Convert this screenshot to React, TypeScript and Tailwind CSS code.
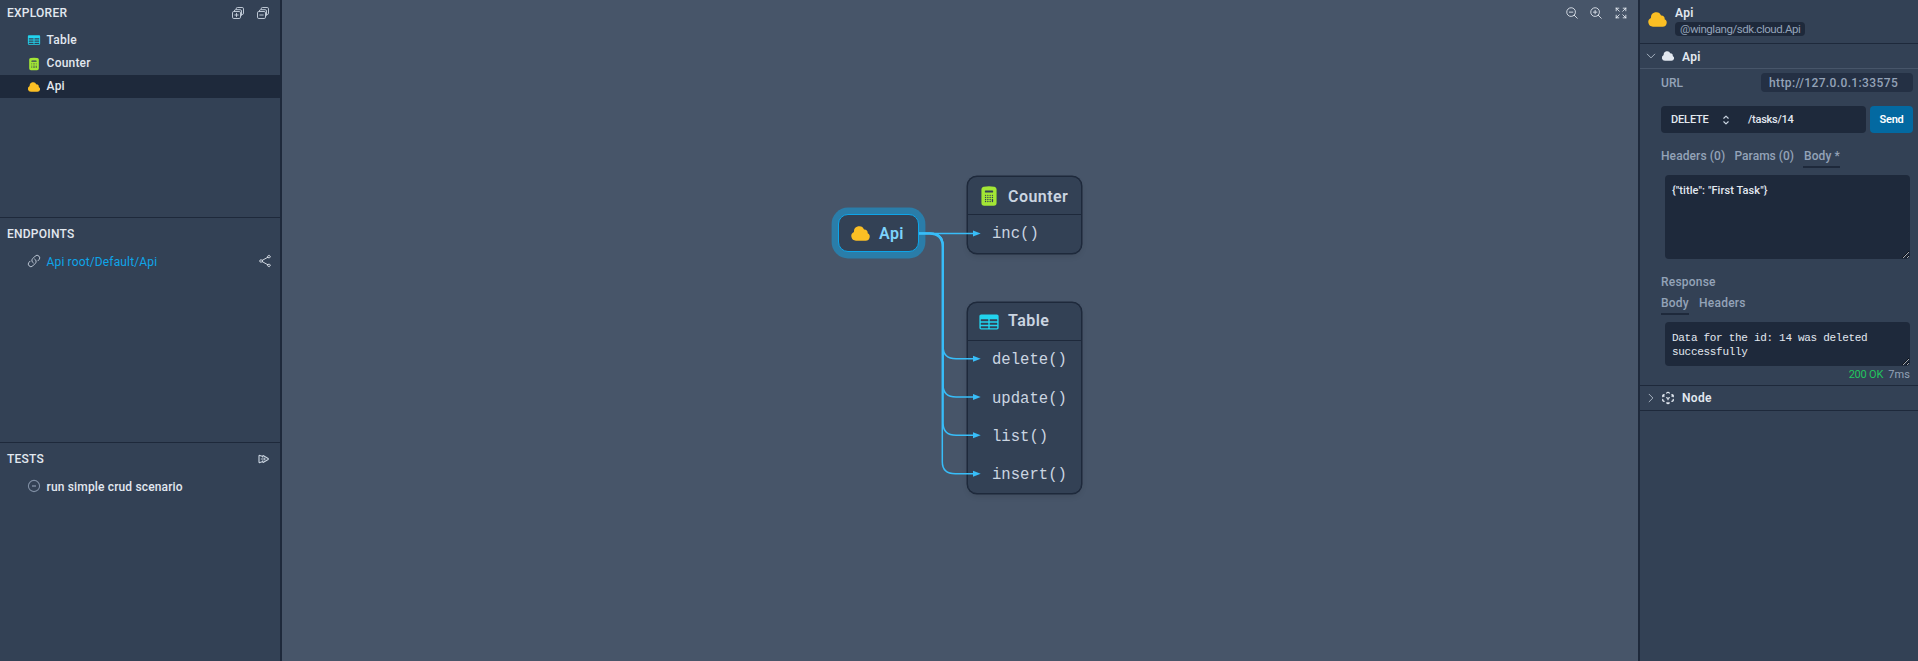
import type { ReactNode } from "react";
import {
  HiTableCells,
  HiCalculator,
  HiCloud,
  HiOutlineLink,
  HiOutlineShare,
  HiOutlineMagnifyingGlassMinus,
  HiOutlineMagnifyingGlassPlus,
  HiOutlineArrowsPointingOut,
  HiOutlineChevronDown,
  HiOutlineChevronRight,
  HiOutlineChevronUpDown,
} from "react-icons/hi2";

function StackIcon({ plus }: { plus?: boolean }) {
  return (
    <svg width="14" height="14" viewBox="0 0 14 14" fill="none" stroke="currentColor" strokeWidth="0.9">
      <path d="M5.2 3.6V2.8A1.3 1.3 0 0 1 6.5 1.5h4.7a1.3 1.3 0 0 1 1.3 1.3v4.4a1.3 1.3 0 0 1-1.3 1.3h-.6" />
      <path d="M3.4 5.6V5a1.3 1.3 0 0 1 1.3-1.3h4.5A1.3 1.3 0 0 1 10.5 5v4a1.3 1.3 0 0 1-1 1.3" />
      <rect x="1.5" y="5.5" width="8" height="7" rx="1.3" />
      <path d="M3.4 9h4.2" />
      {plus && <path d="M5.5 6.9v4.2" />}
    </svg>
  );
}

function RunAllIcon() {
  return (
    <svg width="12" height="10" viewBox="0 0 12 10" fill="none" stroke="currentColor" strokeWidth="1.1" strokeLinejoin="round">
      <path d="M4.2 2.2 1.8 1.4a.6.6 0 0 0-.8.6v6a.6.6 0 0 0 .8.6l2.4-.8" />
      <path d="M4.6 3.4V2.2a.6.6 0 0 1 .9-.5l4.6 2.8a.6.6 0 0 1 0 1L5.5 8.3a.6.6 0 0 1-.9-.5V6.6" />
      <path d="M2.8 5h4.2M5.8 3.6 7.4 5 5.8 6.4" strokeWidth="0.9" />
    </svg>
  );
}

function PendingIcon() {
  return (
    <svg width="14" height="14" viewBox="0 0 14 14" fill="none" stroke="currentColor">
      <circle cx="7" cy="7" r="5.6" strokeWidth="1.1" />
      <path d="M5 7h4" strokeWidth="1.4" />
    </svg>
  );
}

function NodeIcon() {
  return (
    <svg width="14" height="14" viewBox="0 0 24 24" fill="none" stroke="currentColor" strokeWidth="2.1" strokeLinecap="round" strokeLinejoin="round" className="ml-[5px]">
      <path d="m21 7.5-2.25-1.3M21 7.5v2.25M21 7.5l-2.25 1.3M3 7.5l2.25-1.3M3 7.5l2.25 1.3M3 7.5v2.25M12 12.75l2.25-1.3M12 12.75l-2.25-1.3M12 12.75V15M12 21.75l2.25-1.3M12 21.75V19.5M12 21.75l-2.25-1.3M9.75 3.56 12 2.25l2.25 1.3M21 14.25v2.25l-2.25 1.3M5.25 17.8 3 16.5v-2.25" />
    </svg>
  );
}

function Section({ title, actions, className, children }: { title: string; actions?: ReactNode; className: string; children: ReactNode }) {
  return (
    <section className={className}>
      <header className="flex h-[26px] items-center justify-between pl-[7px] pr-[10px] tracking-[0.24px] text-slate-200">
        <span>{title}</span>
        <div className="flex gap-[11px] text-slate-300">{actions}</div>
      </header>
      {children}
    </section>
  );
}

function TreeRow({ icon, label, selected }: { icon: ReactNode; label: string; selected?: boolean }) {
  return (
    <div className={selected ? "flex h-[23px] items-center bg-slate-800 pl-[27px]" : "flex h-[23px] items-center pl-[27px]"}>
      {icon}
      <span className="ml-[5.6px] -mt-px">{label}</span>
    </div>
  );
}

function Sidebar() {
  return (
    <aside className="flex w-[282px] shrink-0 flex-col border-r-2 border-slate-800 bg-slate-700 text-[12px] font-[480] leading-4 tracking-[0.2px] text-slate-200">
      <Section title="EXPLORER" className="h-[217px]" actions={<><StackIcon plus /><StackIcon /></>}>
        <div className="pt-[3px]">
          <TreeRow icon={<HiTableCells className="-mt-px size-[14px] text-cyan-400" />} label="Table" />
          <TreeRow icon={<HiCalculator className="size-[14px] text-lime-400" />} label="Counter" />
          <TreeRow icon={<HiCloud className="size-[14px] text-amber-400" />} label="Api" selected />
        </div>
      </Section>
      <Section title="ENDPOINTS" className="h-[225px] border-t border-slate-800 pt-[3px]">
        <div className="flex h-[28px] items-center pl-[27px] pr-[8px]">
          <HiOutlineLink className="size-[14px] text-slate-300" />
          <span className="ml-[5.6px] mt-[2px] flex-1 font-normal tracking-[0.14px] text-sky-500">Api root/Default/Api</span>
          <HiOutlineShare className="size-[14px] text-slate-200" />
        </div>
      </Section>
      <Section title="TESTS" className="flex-1 border-t border-slate-800 pt-[3px]" actions={<RunAllIcon />}>
        <div className="flex h-[28px] items-center pl-[27px]">
          <span className="text-slate-400/80"><PendingIcon /></span>
          <span className="ml-[5.6px] mt-[2px] tracking-[0.15px]">run simple crud scenario</span>
        </div>
      </Section>
    </aside>
  );
}

const methodRows = [
  { name: "delete()", y: 358.7 },
  { name: "update()", y: 397 },
  { name: "list()", y: 435.3 },
  { name: "insert()", y: 473.7 },
];

function Edges() {
  return (
    <svg className="absolute left-0 top-0" width="1356" height="661" viewBox="282 0 1356 661" fill="none" stroke="#38bdf8" strokeWidth="1.5">
      <path d="M919 233.5H974" />
      {methodRows.map((row, i) => {
        const x = i === 3 ? 942.3 : 943.1;
        const top = i === 3 ? 234 : 233.2;
        return <path key={row.name} d={`M919 ${top}H${x - 13}Q${x} ${top} ${x} ${top + 13}V${row.y - 12}Q${x} ${row.y} ${x + 13} ${row.y}H974`} />;
      })}
      {[233.5, ...methodRows.map((r) => r.y)].map((y) => (
        <path key={y} d={`M973 ${y - 3}L980.7 ${y}L973 ${y + 3}Z`} fill="#38bdf8" stroke="none" />
      ))}
    </svg>
  );
}

function NodeCard({ title, icon, rows, className }: { title: ReactNode; icon: ReactNode; rows: string[]; className: string }) {
  return (
    <div className={className}>
      <div className="flex h-[38px] shrink-0 items-center border-b-[1.3px] border-slate-800 pl-[10px] text-[16px] font-semibold leading-5 tracking-[0.45px]">
        {icon}
        {title}
      </div>
      {rows.map((name) => (
        <div key={name} className="flex h-[38.3px] shrink-0 items-center pl-[24px] pt-[2px] font-['Liberation_Mono',monospace] text-[15.6px]">
          {name}
        </div>
      ))}
    </div>
  );
}

function Canvas() {
  return (
    <main className="relative min-w-0 flex-1 overflow-hidden bg-slate-600 text-slate-300">
      <div className="flex h-[26px] items-center justify-end pr-[10px] text-slate-200">
        <HiOutlineMagnifyingGlassMinus className="size-[14px]" />
        <HiOutlineMagnifyingGlassPlus className="ml-[10px] size-[14px]" />
        <HiOutlineArrowsPointingOut className="ml-[11px] size-[14px]" />
      </div>
      <div className="absolute left-[556px] top-[214px] flex h-[38px] w-[81px] items-center rounded-[10px] border border-sky-500 bg-slate-700 pl-[11px] shadow-[0_0_0_6.4px_rgba(14,165,233,0.5)]">
        <HiCloud className="size-[21px] text-amber-400" />
        <span className="ml-[8px] mt-[2px] text-[16px] font-semibold leading-5 tracking-[0.4px] text-sky-300">Api</span>
      </div>
      <NodeCard
        title={<span className="ml-[8px] mt-[3px]">Counter</span>}
        icon={<HiCalculator className="size-[22px] text-lime-400" />}
        rows={["inc()"]}
        className="absolute left-[685px] top-[176px] flex h-[78px] w-[115px] flex-col rounded-[10px] border border-slate-800 bg-slate-700 shadow-[0_0_0_0.5px_#1e293b,0_3px_6px_-1px_rgba(0,0,0,0.12)]"
      />
      <NodeCard
        title={<span className="ml-[8px] -mt-px">Table</span>}
        icon={<HiTableCells className="size-[22px] text-cyan-400" />}
        rows={methodRows.map((row) => row.name)}
        className="absolute left-[685px] top-[302px] flex h-[192px] w-[115px] flex-col rounded-[10px] border border-slate-800 bg-slate-700 shadow-[0_0_0_0.5px_#1e293b,0_3px_6px_-1px_rgba(0,0,0,0.12)]"
      />
      <Edges />
    </main>
  );
}

function Inspector() {
  return (
    <aside className="flex w-[280px] shrink-0 flex-col border-l-2 border-slate-800 bg-slate-700 text-[12px] font-[480] leading-4 text-slate-400">
      <header className="flex h-[44px] border-b border-slate-800 pl-[7px]">
        <HiCloud className="mt-[9px] size-[21px] text-amber-400" />
        <div className="ml-[7px] flex flex-col items-start pt-[5px]">
          <span className="font-semibold tracking-[0.3px] text-slate-200">Api</span>
          <span className="mt-[1px] h-[14px] w-[130px] whitespace-nowrap rounded bg-slate-800 pl-[5px] text-[11.5px] font-normal leading-[14px] tracking-[-0.44px]">@winglang/sdk.cloud.Api</span>
        </div>
      </header>
      <div className="flex h-[25px] items-center border-b border-slate-600 pl-[5px] text-slate-200">
        <HiOutlineChevronDown className="size-[12px] text-slate-300" />
        <HiCloud className="ml-[4px] size-[14px]" />
        <span className="ml-[7px] mt-px font-semibold tracking-[0.3px]">Api</span>
      </div>
      <div className="flex h-[317px] flex-col border-b border-slate-800 pl-[21px] pr-[5px] pt-[4px] tracking-[0.1px]">
        <div className="flex h-[19px] items-center justify-between">
          <span>URL</span>
          <span className="h-[19px] w-[152px] rounded bg-[#243044] pl-[8px] font-medium leading-[20px] tracking-[0.38px]">http://127.0.0.1:33575</span>
        </div>
        <div className="mt-[14px] flex h-[27px] gap-[4px] text-[11px] tracking-[-0.1px] text-slate-200">
          <div className="flex w-[205px] items-center rounded bg-slate-800 pl-[10px]">
            <span className="w-[48px] tracking-[-0.15px]">DELETE</span>
            <HiOutlineChevronUpDown className="size-[14px] stroke-2 text-slate-300" />
            <span className="ml-[15px] tracking-[-0.25px]">/tasks/14</span>
          </div>
          <div className="flex w-[43px] items-center justify-center rounded bg-sky-700 font-semibold tracking-[-0.2px] text-white">Send</div>
        </div>
        <div className="mt-[15px] flex h-[20px] gap-[10px]">
          <span className="w-[63.5px] whitespace-nowrap">Headers (0)</span>
          <span className="w-[58.5px] whitespace-nowrap tracking-[0.02px]">Params (0)</span>
          <span className="w-[37px] whitespace-nowrap border-b-2 border-slate-800 pl-[1px]">Body *</span>
        </div>
        <textarea
          readOnly
          defaultValue={'{"title": "First Task"}'}
          className="ml-[4px] mt-[7px] block h-[84px] w-[245px] shrink-0 rounded bg-slate-800 px-[7px] py-[9px] text-[11px] leading-[14px] tracking-[0.08px] text-slate-200 outline-none"
        />
        <span className="mt-[15px] font-medium tracking-[0.22px]">Response</span>
        <div className="mt-[5px] flex h-[20px] gap-[10px]">
          <span className="w-[28px] border-b-2 border-slate-800 tracking-[0.2px]">Body</span>
          <span className="tracking-[0.25px]">Headers</span>
        </div>
        <textarea
          readOnly
          defaultValue="Data for the id: 14 was deleted successfully"
          className="ml-[4px] mt-[7px] block h-[44px] w-[245px] shrink-0 overflow-hidden rounded bg-slate-800 px-[7px] py-[9px] font-['Liberation_Mono',monospace] text-[11px] leading-[14px] tracking-[-0.3px] text-slate-200 outline-none"
        />
        <div className="mt-px flex justify-end gap-[5px] pr-[3px] text-[11px] font-normal">
          <span className="tracking-[-0.2px] text-green-500">200 OK</span>
          <span>7ms</span>
        </div>
      </div>
      <div className="flex h-[25px] items-center border-b border-slate-800 pl-[5px] text-slate-200">
        <HiOutlineChevronRight className="-mr-px size-[12px] text-slate-300" />
        <NodeIcon />
        <span className="ml-[7px] font-semibold tracking-[0.3px]">Node</span>
      </div>
    </aside>
  );
}

export default function App() {
  return (
    <div className="flex h-[661px] w-[1918px] overflow-hidden bg-slate-600 font-[Roboto,sans-serif] [--color-amber-400:#fbbf24] [--color-cyan-400:#22d3ee] [--color-green-500:#22c55e] [--color-lime-400:#a3e635] [--color-sky-300:#7dd3fc] [--color-sky-500:#0ea5e9] [--color-sky-700:#0369a1] [--color-slate-200:#e2e8f0] [--color-slate-300:#cbd5e1] [--color-slate-400:#94a3b8] [--color-slate-600:#475569] [--color-slate-700:#334155] [--color-slate-800:#1e293b]">
      <Sidebar />
      <Canvas />
      <Inspector />
    </div>
  );
}
